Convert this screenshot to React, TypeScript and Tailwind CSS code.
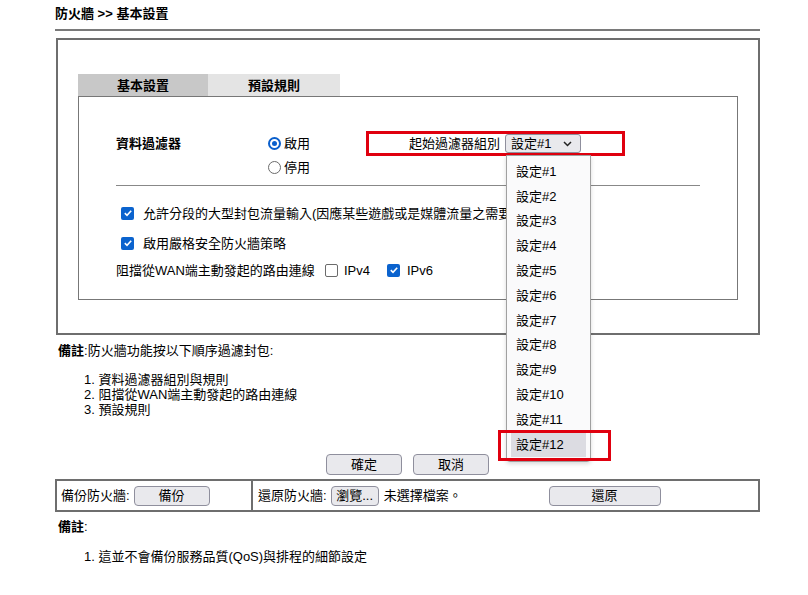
import React from "react";

const Radio = ({ checked }: { checked: boolean }) =>
  checked ? (
    <span className="flex h-[13px] w-[13px] items-center justify-center rounded-full border-2 border-[#0a5fcc]">
      <span className="h-[5px] w-[5px] rounded-full bg-[#0a5fcc]" />
    </span>
  ) : (
    <span className="h-[13px] w-[13px] rounded-full border-[1.5px] border-[#6b6b6b]" />
  );

const Check = ({ checked }: { checked: boolean }) =>
  checked ? (
    <span className="flex h-[13px] w-[13px] items-center justify-center rounded-[2px] bg-[#0b63ce]">
      <svg width="10" height="10" viewBox="0 0 10 10">
        <path d="M1.8 5.2 L4 7.3 L8.2 2.8" fill="none" stroke="white" strokeWidth="1.6" />
      </svg>
    </span>
  ) : (
    <span className="h-[13px] w-[13px] rounded-[2px] border-[1.5px] border-[#6b6b6b] bg-white" />
  );

const Btn = ({ label, w }: { label: string; w: string }) => (
  <span
    className={`${w} flex h-[20px] items-center justify-center rounded-[4px] border border-[#8f8f9d] bg-[#e9e9ed] text-[13px]`}
  >
    {label}
  </span>
);

const options = Array.from({ length: 12 }, (_, i) => `設定#${i + 1}`);

export default function App() {
  return (
    <div className="relative h-[595px] w-[808px] overflow-hidden bg-white text-[13px] leading-[15px] text-black font-['Liberation_Sans','Noto_Sans_CJK_TC',sans-serif]">
      <div className="ml-[55px] w-[705px]">
        <div className="h-[29px] pt-[6px] font-bold leading-[16px]">防火牆 &gt;&gt; 基本設置</div>
        <div className="h-[2px] bg-[#7a7a7a]" />

        {/* main box */}
        <div className="ml-[1px] mt-[7px] h-[297px] w-[704px] border-2 border-[#6e6e6e] px-[20px] pt-[34px]">
          <div className="flex h-[22px]">
            <div className="flex w-[130px] items-center justify-center bg-[#c8c8c8] font-bold">基本設置</div>
            <div className="flex w-[132px] items-center justify-center bg-[#e4e4e4] font-bold">預設規則</div>
          </div>
          <div className="h-[204px] border border-[#777] pl-[37px] pt-[34px]">
            <div className="flex">
              <div className="flex h-[24px] w-[152px] items-center font-bold">資料過濾器</div>
              <div className="flex w-[98px] flex-col">
                <label className="flex h-[24px] items-center gap-[3px]">
                  <Radio checked />
                  啟用
                </label>
                <label className="flex h-[24px] items-center gap-[3px]">
                  <Radio checked={false} />
                  停用
                </label>
              </div>
              <div className="flex h-[25px] w-[259px] items-center justify-end gap-[5px] border-[3px] border-[#e0000f] pr-[41px]">
                <span>起始過濾器組別</span>
                <span className="flex h-[19px] w-[76px] items-center justify-between rounded-[3px] border border-[#8f8f9d] bg-[#e9e9ed] pl-[5px] pr-[8px]">
                  設定#1
                  <svg width="9" height="6" viewBox="0 0 9 6">
                    <path d="M1 1 L4.5 4.5 L8 1" fill="none" stroke="#222" strokeWidth="1.5" />
                  </svg>
                </span>
              </div>
            </div>
            <div className="mt-[6px] h-px w-[584px] bg-[#888]" />
            <div className="mt-[15px] flex h-[24px] items-center gap-[9px] pl-[5px]">
              <Check checked />
              <span className="whitespace-nowrap">允許分段的大型封包流量輸入(因應某些遊戲或是媒體流量之需要)</span>
            </div>
            <div className="mt-[6px] flex h-[24px] items-center gap-[9px] pl-[5px]">
              <Check checked />
              <span>啟用嚴格安全防火牆策略</span>
            </div>
            <div className="mt-[3px] flex h-[24px] items-center">
              <span className="w-[209px]">阻擋從WAN端主動發起的路由連線</span>
              <Check checked={false} />
              <span className="ml-[6px] w-[43px]">IPv4</span>
              <Check checked />
              <span className="ml-[7px]">IPv6</span>
            </div>
          </div>
        </div>

        {/* notes */}
        <div className="ml-[3px] mt-[8px]">
          <b>備註</b>:防火牆功能按以下順序過濾封包:
        </div>
        <ol className="ml-[29px] mt-[14px]">
          <li>1. 資料過濾器組別與規則</li>
          <li>2. 阻擋從WAN端主動發起的路由連線</li>
          <li>3. 預設規則</li>
        </ol>

        <div className="mt-[37px] flex justify-center gap-[11px]">
          <span className="flex h-[21px] w-[76px] items-center justify-center rounded-[4px] border border-[#8f8f9d] bg-[#e9e9ed]">確定</span>
          <span className="flex h-[21px] w-[76px] items-center justify-center rounded-[4px] border border-[#8f8f9d] bg-[#e9e9ed]">取消</span>
        </div>

        {/* backup / restore */}
        <div className="mt-[4px] flex h-[33px] border-2 border-[#6e6e6e]">
          <div className="flex w-[196px] items-center gap-[4px] border-r-2 border-[#6e6e6e] pl-[4px]">
            <span>備份防火牆:</span>
            <Btn label="備份" w="w-[76px]" />
          </div>
          <div className="flex flex-1 items-center pl-[5px]">
            <span>還原防火牆:</span>
            <span className="ml-[4px] flex h-[20px] w-[48px] items-center justify-center rounded-[4px] border border-[#8f8f9d] bg-[#e9e9ed]">瀏覽...</span>
            <span className="ml-[5px] w-[165px]">未選擇檔案。</span>
            <Btn label="還原" w="w-[112px]" />
          </div>
        </div>

        <div className="ml-[3px] mt-[7px] font-bold">
          備註<span className="font-normal">:</span>
        </div>
        <div className="ml-[29px] mt-[15px]">1. 這並不會備份服務品質(QoS)與排程的細節設定</div>
      </div>

      {/* open select list */}
      <div className="absolute left-[506px] top-[155px] h-[307px] w-[85px] rounded-b-[4px] border border-[#a0a0a0] bg-[#fafafb] pt-[3px] shadow-[0_2px_4px_rgba(0,0,0,0.15)]">
        {options.map((o, i) => (
          <div
            key={o}
            className={
              i === 11
                ? "mx-[4px] flex h-[24.8px] items-center bg-[#dcdce2] pl-[5px]"
                : "mx-[4px] flex h-[24.8px] items-center pl-[5px]"
            }
          >
            {o}
          </div>
        ))}
      </div>
      <div className="absolute left-[498px] top-[430px] h-[31px] w-[113px] border-[3px] border-[#e0000f]" />
    </div>
  );
}
